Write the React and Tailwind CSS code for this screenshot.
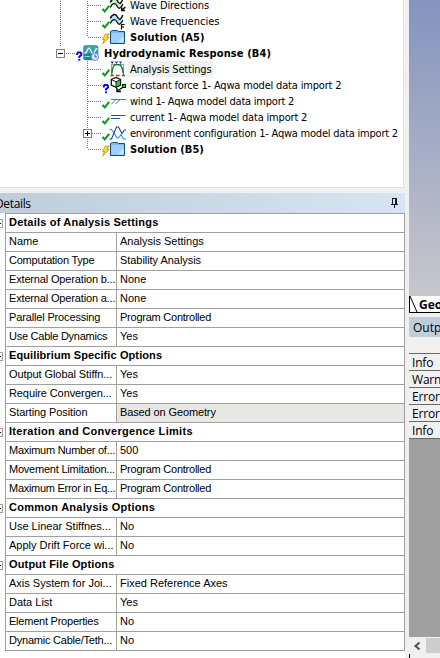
import React from 'react';

function Check() {
  return <path d="M1.5 11.8 L3.7 14.4 L8.2 8.8" stroke="#0a9a1c" strokeWidth="2" fill="none" />;
}
function Question() {
  return (
    <g stroke="#0a0af0" strokeWidth="2" fill="none">
      <path d="M2.8 10.4 V9 L3.6 8 H6.1 L7 9 V10.6 L5 12.2 V13.6" />
      <path d="M5 14.4 V16.2" />
    </g>
  );
}
function Bolt() {
  return <path d="M4.6 5 H8.2 L5.8 8.6 H8.2 L1.6 14.8 L3.6 10.4 H1.6 Z" fill="#ffe53b" stroke="#c78a10" strokeWidth="0.9" />;
}
function Wave({ letter }) {
  return (
    <g fill="none">
      <path
        d="M9.5 5.5 C11.5 0.5 15 0.5 16.5 4 S20 7 21.5 2.5 V7.5 C20 12.5 17.5 12 16 8.5 S11.5 5.5 9.5 10.5 Z"
        fill={letter ? '#a9e6fb' : '#c3ecc8'}
      />
      <path d="M9.3 5.5 C11.5 0.5 15 0.5 16.5 4 S20 7 21.8 2" stroke="#111" strokeWidth="1.5" />
      <path d="M9.3 10.5 C11.5 5.5 14.5 5.5 16 9 S20 12 21.8 7" stroke="#111" strokeWidth="1.3" />
      {letter
        ? <path d="M20.5 16.5 V11.5 H23.7 M20.5 13.8 H23" stroke="#111" strokeWidth="1.2" />
        : <path d="M24.5 10 L21 13 M20.7 10.5 V13.4 H24" stroke="#111" strokeWidth="1.5" />}
    </g>
  );
}
function Folder() {
  return (
    <g>
      <path d="M9.5 14.5 V2.5 L11.5 1.5 H16 L17.5 2.5 H23.5 V14.5 Z" fill="#7db8f0" stroke="#0f4f8f" />
      <path d="M10.5 4 H22.5 V13.6 H10.5 Z" fill="#9fd0fb" />
      <path d="M17 13.6 L22.7 7 V13.6 Z" fill="#c3e5ff" />
    </g>
  );
}
function Settings() {
  return (
    <g fill="none">
      <path d="M9.5 0.5 H13 L11.2 3 Z M14 0.5 H17 L15.5 3 Z M18 0.5 H21 L19.5 3 Z" fill="#1b2fc0" />
      <path d="M10.5 3 V12.5 M22.5 3 V12.5 M10 3.5 H23" stroke="#9a9a9a" />
      <path d="M10.8 12.5 C11.5 7 12.5 3.8 14.5 3.8 H18 C20.5 3.8 21.5 7 22.2 12.5" stroke="#157a35" strokeWidth="1.5" />
      <path d="M9 15.2 L11 12.6 L13 15.2 Z M20.5 15.2 L22.5 12.6 L24.5 15.2 Z M15 15.2 H18.5 V13.8 H15 Z" fill="#c81e1e" />
    </g>
  );
}
function Force() {
  return (
    <g>
      <path d="M10.3 2.5 L14.8 0.5 L19.5 2.5 V8 L15 10.3 L10.3 8 Z" fill="#fff" stroke="#111" strokeWidth="1.3" />
      <path d="M15 4.8 L19.5 2.7 V8 L15 10.2 Z" fill="#18d82c" stroke="#111" strokeWidth="0.9" />
      <path d="M10.3 2.5 L15 4.8" stroke="#111" />
      <path d="M21.5 10.5 L16.5 14 M16 11 V14.5 H20" stroke="#111" strokeWidth="1.5" fill="none" />
      <rect x="21.5" y="7.5" width="3" height="3" fill="#18d82c" stroke="#111" />
    </g>
  );
}
function Wind() {
  return (
    <g fill="none">
      <path d="M10 6.5 H25" stroke="#1687d6" />
      <path d="M10.5 11 L14.5 7 M14.5 11 L18.5 7" stroke="#2a7ccc" />
    </g>
  );
}
function Current() {
  return <path d="M10 6.5 H24.5 M10 9.5 H19" stroke="#1c50b4" fill="none" />;
}
function Environment() {
  return (
    <g fill="none" strokeWidth="1.1">
      <path d="M8.5 4.5 H10.5 L13 8 L16 13 H17.5 L20 9.5 L22.5 14 H25" stroke="#2d8de0" />
      <path d="M8.5 14 H10.5 L15.5 2 H17.5 L21 8.5 L23.5 5 H25" stroke="#173f9f" />
    </g>
  );
}

const base = [
  { label: 'Wave Directions', status: <Check />, icon: <Wave />, size: 'tracking-[-0.07px]' },
  { label: 'Wave Frequencies', status: <Check />, icon: <Wave letter />, size: 'tracking-[0px]' },
  { label: 'Solution (A5)', status: <Bolt />, icon: <Folder />, size: 'font-bold tracking-[0.1px]' },
];
const response = [
  { label: 'Analysis Settings', status: <Check />, icon: <Settings />, selected: true, size: 'tracking-[-0.18px]' },
  { label: 'constant force 1- Aqwa model data import 2', status: <Question />, icon: <Force />, size: 'tracking-[-0.18px]' },
  { label: 'wind 1- Aqwa model data import 2', status: <Check />, icon: <Wind />, size: 'tracking-[-0.22px]' },
  { label: 'current 1- Aqwa model data import 2', status: <Check />, icon: <Current />, size: 'tracking-[-0.18px]' },
  { label: 'environment configuration 1- Aqwa model data import 2', status: <Check />, icon: <Environment />, expandable: true, size: 'tracking-[-0.22px]' },
  { label: 'Solution (B5)', status: <Bolt />, icon: <Folder />, size: 'font-bold tracking-[0.05px]' },
];

function TreeRow({ label, status, icon, selected, expandable, size, last }) {
  return (
    <div className="flex h-4 items-center whitespace-nowrap">
      <svg className="h-4 w-[101px] shrink-0" viewBox="0 0 101 16" shapeRendering="crispEdges">
        <path d={last ? 'M87.5 0 V8' : 'M87.5 0 V16'} stroke="#808080" strokeDasharray="1 1" />
        <path d="M88 8.5 H101" stroke="#808080" strokeDasharray="1 1" />
        {expandable && (
          <g>
            <rect x="83.5" y="4.5" width="8" height="8" fill="#fff" stroke="#808080" />
            <path d="M85 8.5 H90 M87.5 6 V11" stroke="#000" />
          </g>
        )}
      </svg>
      <svg className="h-4 w-[27px] shrink-0 overflow-visible" viewBox="0 0 27 16">{status}{icon}</svg>
      <span className={`h-4 pl-0.5 leading-[18px] ${size} ${selected ? 'bg-[#f0f0f0] pr-[2px]' : ''}`}>{label}</span>
    </div>
  );
}

const groups = [
  { title: 'Details of Analysis Settings', spacing: 'tracking-[0.2px]', rows: [
    ['Name', 'Analysis Settings', '', ''],
    ['Computation Type', 'Stability Analysis', 'tracking-[-0.23px]', 'tracking-[-0.05px]'],
    ['External Operation b...', 'None', 'tracking-[-0.16px]', ''],
    ['External Operation a...', 'None', 'tracking-[-0.16px]', ''],
    ['Parallel Processing', 'Program Controlled', 'tracking-[-0.15px]', 'tracking-[-0.24px]'],
    ['Use Cable Dynamics', 'Yes', 'tracking-[-0.25px]', ''] ] },
  { title: 'Equilibrium Specific Options', spacing: 'tracking-[0.1px]', rows: [
    ['Output Global Stiffn...', 'Yes', 'tracking-[-0.08px]', ''],
    ['Require Convergen...', 'Yes', 'tracking-[-0.1px]', ''],
    ['Starting Position', 'Based on Geometry', 'tracking-[-0.1px]', 'tracking-[-0.12px]', true] ] },
  { title: 'Iteration and Convergence Limits', spacing: 'tracking-[0.3px]', rows: [
    ['Maximum Number of...', '500', 'tracking-[-0.26px]', ''],
    ['Movement Limitation...', 'Program Controlled', 'tracking-[-0.22px]', 'tracking-[-0.24px]'],
    ['Maximum Error in Eq...', 'Program Controlled', 'tracking-[-0.28px]', 'tracking-[-0.24px]'] ] },
  { title: 'Common Analysis Options', spacing: 'tracking-[0.26px]', rows: [
    ['Use Linear Stiffnes...', 'No', '', ''],
    ['Apply Drift Force wi...', 'No', '', ''] ] },
  { title: 'Output File Options', spacing: 'tracking-[0.15px]', rows: [
    ['Axis System for Joi...', 'Fixed Reference Axes', '', ''],
    ['Data List', 'Yes', '', ''],
    ['Element Properties', 'No', 'tracking-[-0.23px]', ''],
    ['Dynamic Cable/Teth...', 'No', 'tracking-[-0.22px]', ''] ] },
];

function Group({ title, spacing, rows }) {
  return (
    <>
      <div className="flex h-[19px]">
        <div className="flex w-[5px] items-center">
          <div className="flex h-[9px] w-[3px] items-center border border-l-0 border-[#a0a0a0]"><div className="h-px w-px bg-black" /></div>
        </div>
        <div className={`flex-1 border-x border-b border-[#a0a0a0] pl-[3px] text-[11px] leading-[17px] font-bold ${spacing}`}>{title}</div>
      </div>
      {rows.map(([name, value, nameSpacing, valueSpacing, active]) => (
        <div key={name} className="ml-[5px] flex h-[19px] border-x border-b border-[#a0a0a0] leading-[17px] whitespace-nowrap">
          <div className={`w-[111px] border-r border-[#a0a0a0] pl-[3px] ${nameSpacing}`}>{name}</div>
          <div className={`flex-1 pl-[3px] ${valueSpacing} ${active ? 'bg-[#e8e7e3]' : ''}`}>{value}</div>
        </div>
      ))}
    </>
  );
}

export default function App() {
  return (
    <div className="flex h-[658px] w-[440px] overflow-hidden bg-[#f0f0f0] text-black">
      <div className="flex w-[405px] shrink-0 flex-col">
        <div className="h-[188px] w-[404px] overflow-hidden border-r border-b border-[#dfdfdf] bg-white font-['DejaVu_Sans_Condensed','DejaVu_Sans',sans-serif] text-[11px]">
          <div className="relative -mt-[3px]">
            <svg className="absolute top-0 left-[60px] h-[49px] w-px" viewBox="0 0 1 49" shapeRendering="crispEdges">
              <path d="M0.5 0 V49" stroke="#808080" strokeDasharray="1 1" />
            </svg>
            {base.map((r, i) => <TreeRow key={r.label} {...r} last={i === 2} />)}
            <div className="flex h-4 items-center font-bold whitespace-nowrap">
              <svg className="h-4 w-[102px] shrink-0 overflow-visible" viewBox="0 0 102 16">
                <g shapeRendering="crispEdges">
                  <rect x="56.5" y="4.5" width="8" height="8" fill="#fff" stroke="#808080" />
                  <path d="M58 8.5 H63" stroke="#000" />
                  <path d="M66 8.5 H76" stroke="#808080" strokeDasharray="1 1" />
                </g>
                <g transform="translate(74.3 -0.5)"><Question /></g>
                <rect x="83.3" y="0.3" width="15" height="15" rx="2.5" fill="#23858f" />
                <rect x="84" y="1" width="13.6" height="7" rx="2" fill="#3aa3ab" />
                <path d="M84.5 8 H86 L88 4 C88.6 3 89.4 3 90 4 L92 8 C92.6 9 93.4 9 94 8 L96 4 L97.5 4" stroke="#e8ffff" fill="none" strokeWidth="1.3" />
                <path d="M84.5 11.5 H90" stroke="#8bd5da" />
                <circle cx="95" cy="11.7" r="3.6" fill="#dfe9ff" stroke="#6f8fdc" />
                <path d="M95 9.5 V12 H97" stroke="#3558a8" fill="none" />
              </svg>
              <span className="h-4 pl-0.5 leading-[18px] tracking-[0.1px]">Hydrodynamic Response (B4)</span>
            </div>
            {response.map((r, i) => <TreeRow key={r.label} {...r} last={i === 5} />)}
          </div>
        </div>
        <div className="mt-[5px] flex h-5 items-center justify-between overflow-hidden bg-linear-to-r from-[#bfcddb] to-[#d7e4f2] font-['Open_Sans',sans-serif] text-[12px]">
          <span className="-ml-[5px] leading-[21px] tracking-[-0.35px]">Details</span>
          <svg className="mr-[6px] h-3 w-[9px]" viewBox="0 0 9 12" shapeRendering="crispEdges">
            <path d="M2.5 1 V7 M2 1.5 H6 M5.5 1 V7 M6.5 1 V7 M1 7.5 H8 M4.5 8 V11" stroke="#10182c" fill="none" />
          </svg>
        </div>
        <div className="flex-1 bg-white font-['Liberation_Sans',Arial,sans-serif] text-[11px]">
          <div className="ml-[5px] h-px bg-[#a0a0a0]" />
          {groups.map((g) => <Group key={g.title} {...g} />)}
        </div>
      </div>
      <div className="ml-1 flex w-[31px] shrink-0 flex-col overflow-hidden font-['Open_Sans',sans-serif] text-[12px]">
        <div className="h-[296px] bg-linear-to-b from-[#8593be] to-[#c7c7cb]" />
        <div className="flex h-[17px] border-b border-l border-black bg-white font-bold">
          <svg className="h-4 w-[9px] shrink-0" viewBox="0 0 9 16"><path d="M0 0 L7 16" stroke="#000" /></svg>
          <span className="leading-[17px]">Geometry</span>
        </div>
        <div className="mt-1 h-5 bg-[#bfcddb] pl-1 leading-[21px]">Output</div>
        <div className="h-[17px] border-b border-[#696969]" />
        {['Info', 'Warning', 'Error', 'Error', 'Info'].map((t, i) => (
          <div key={i} className="h-[17px] border-b border-[#696969] pl-[3px] leading-[17px] tracking-[-0.2px]">{t}</div>
        ))}
        <div className="h-[198px] bg-[#a0a0a0]" />
        <div className="flex h-[17px] items-center">
          <svg className="h-4 w-[17px]" viewBox="0 0 17 16"><path d="M10.5 4.5 L6.5 8 L10.5 11.5" stroke="#505050" strokeWidth="2" fill="none" /></svg>
          <div className="h-[15px] flex-1 bg-[#cdcdcd]" />
        </div>
        <div className="h-1 w-px bg-black" />
      </div>
    </div>
  );
}
